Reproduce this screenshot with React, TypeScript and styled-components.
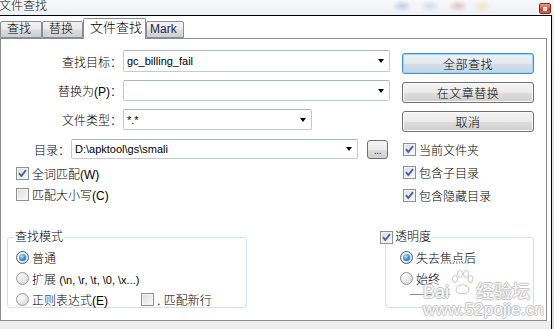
import React from "react";
import styled, { createGlobalStyle } from "styled-components";

const Global = createGlobalStyle`
  html, body { margin: 0; padding: 0; background: #e4e4e4; }
  body {
    font-family: "Liberation Sans", "Noto Sans CJK SC", sans-serif;
    font-size: 12px;
    font-weight: 300;
    color: #000;
  }
  * { box-sizing: border-box; }
`;

const Screen = styled.div`
  position: relative;
  width: 554px;
  height: 329px;
  overflow: hidden;
  display: flex;
  flex-direction: column;
  background: #e2e2e2;
`;

const TitleBar = styled.div`
  height: 15px;
  flex: none;
  display: flex;
  justify-content: space-between;
  align-items: flex-start;
  padding-right: 3px;
  background:
    radial-gradient(ellipse 10px 6px at 402px 6px, rgba(90, 130, 190, 0.35), transparent),
    radial-gradient(ellipse 10px 6px at 430px 6px, rgba(120, 160, 210, 0.3), transparent),
    radial-gradient(ellipse 10px 6px at 458px 6px, rgba(200, 70, 60, 0.3), transparent),
    radial-gradient(ellipse 10px 6px at 482px 6px, rgba(230, 200, 90, 0.35), transparent),
    linear-gradient(#f7f8fa, #eef1f5);
`;

const TitleText = styled.span`
  font-size: 12px;
  line-height: 13px;
  margin-left: -1px;
  color: #111;
  text-shadow: 0 0 3px #fff;
`;

const CloseButton = styled.div`
  width: 12px;
  height: 11px;
  margin-top: 3px;
  border: 1px solid #8a2a1c;
  border-radius: 2px;
  background: linear-gradient(#e9a08c, #d2553b 50%, #c23a22 51%, #d8674c);
  display: flex;
  align-items: center;
  justify-content: center;
`;

const CloseGlyph = styled.span`
  width: 4px;
  height: 4px;
  background: #cfcfcf;
  border: 1px solid #fff;
`;

const WindowRow = styled.div`
  flex: 1;
  display: flex;
`;

const Window = styled.div`
  width: 552px;
  border-top: 1px solid #000;
  border-right: 1px solid #000;
  background: #fff;
  display: flex;
  flex-direction: column;
`;

const Desktop = styled.div`
  flex: 1;
  background: linear-gradient(#e8e8e8, #dcdcdc);
`;

const TabStrip = styled.div`
  height: 22px;
  flex: none;
  display: flex;
  align-items: flex-end;
  position: relative;
  z-index: 1;
`;

const Tab = styled.div<{ $active?: boolean; $w: number; $pad: number }>`
  width: ${(p) => p.$w}px;
  height: ${(p) => (p.$active ? 21 : 17)}px;
  margin-bottom: ${(p) => (p.$active ? -1 : 0)}px;
  border: 1px solid #898c95;
  border-bottom: ${(p) => (p.$active ? "none" : "1px solid #898c95")};
  border-radius: 2px 2px 0 0;
  background: ${(p) =>
    p.$active ? "#fff" : "linear-gradient(#f3f3f3, #ebebeb 45%, #dcdcdc 55%, #cfcfcf)"};
  display: flex;
  align-items: ${(p) => (p.$active ? "flex-start" : "center")};
  padding-left: ${(p) => p.$pad}px;
  padding-top: ${(p) => (p.$active ? 1 : 0)}px;
  font-size: ${(p) => (p.$active ? 13 : 12)}px;
  line-height: 15px;
  color: #000;
`;

const MarkText = styled.span`
  font-family: "Liberation Sans", sans-serif;
  font-size: 12px;
  color: #1c2450;
`;

const Panel = styled.div`
  width: 547px;
  height: 283px;
  flex: none;
  border: 1px solid #898c95;
  display: flex;
  flex-direction: column;
`;

const TopSection = styled.div`
  display: flex;
`;

const LeftCol = styled.div`
  width: 401px;
  padding-top: 11px;
  display: flex;
  flex-direction: column;
`;

const RightCol = styled.div`
  width: 132px;
  padding-top: 14px;
  display: flex;
  flex-direction: column;
`;

const FieldRow = styled.div<{ $mt: number }>`
  display: flex;
  align-items: center;
  margin-top: ${(p) => p.$mt}px;
`;

const FieldLabel = styled.label<{ $w: number }>`
  width: ${(p) => p.$w}px;
  text-align: right;
  padding-right: 1px;
  white-space: nowrap;
  font-size: 12px;
`;

const Combo = styled.div<{ $w: number; $h: number }>`
  width: ${(p) => p.$w}px;
  height: ${(p) => p.$h}px;
  border: 1px solid #c3cad3;
  border-top-color: #abb3bd;
  border-radius: 2px;
  background: #fff;
  display: flex;
  align-items: center;
  padding-left: 3px;
  padding-right: 5px;
`;

const ComboValue = styled.span`
  flex: 1;
  font-size: 11px;
  white-space: nowrap;
  overflow: hidden;
`;

const DropArrow = styled.span`
  width: 0;
  height: 0;
  border-left: 3.5px solid transparent;
  border-right: 3.5px solid transparent;
  border-top: 4px solid #000;
`;

const BrowseButton = styled.div`
  width: 21px;
  height: 19px;
  margin-left: 9px;
  border: 1px solid #707070;
  border-radius: 3px;
  background: linear-gradient(#f4f4f4, #ebebeb 50%, #dddddd 51%, #cfcfcf);
  display: flex;
  align-items: flex-end;
  justify-content: center;
  padding-bottom: 2px;
  font-size: 10px;
  line-height: 10px;
  color: #1e2a66;
  letter-spacing: -0.5px;
`;

const Button = styled.div<{ $default?: boolean; $mt: number }>`
  height: 21px;
  margin-top: ${(p) => p.$mt}px;
  border: 1px solid ${(p) => (p.$default ? "#3c8fd0" : "#707070")};
  border-radius: 3px;
  background: ${(p) =>
    p.$default
      ? "linear-gradient(#eef3f7, #e1e9ef 50%, #d2dee8 51%, #c8d6e2)"
      : "linear-gradient(#f4f4f4, #ebebeb 50%, #dddddd 51%, #cfcfcf)"};
  box-shadow: ${(p) => (p.$default ? "inset 0 0 0 1px #9fd6f7" : "inset 0 0 0 1px #fbfbfb")};
  display: flex;
  align-items: center;
  justify-content: center;
  font-size: 12px;
  letter-spacing: 0.5px;
  color: #000;
`;

const CheckRow = styled.div<{ $mt: number; $pl: number }>`
  display: flex;
  align-items: center;
  height: 13px;
  margin-top: ${(p) => p.$mt}px;
  padding-left: ${(p) => p.$pl}px;
  gap: 3px;
  white-space: nowrap;
  font-size: 12px;
`;

const Box = styled.span`
  width: 13px;
  height: 13px;
  flex: none;
  border: 1px solid #8e8f8f;
  background: linear-gradient(135deg, #dcdcdc, #fbfbfb);
  box-shadow: inset 0 0 0 1px #f4f4f4;
  display: flex;
  align-items: center;
  justify-content: center;
`;

const Check = ({ on }: { on?: boolean }) => (
  <Box>
    {on && (
      <svg width="11" height="11" viewBox="0 0 11 11">
        <path d="M2 5.2 L4.3 8 L9 2.2" fill="none" stroke="#4a5fa8" strokeWidth="1.9" />
      </svg>
    )}
  </Box>
);

const RadioCircle = styled.span<{ $on?: boolean }>`
  width: 13px;
  height: 13px;
  flex: none;
  border-radius: 50%;
  border: 1px solid ${(p) => (p.$on ? "#4c6079" : "#9a9a9a")};
  background: radial-gradient(circle at 35% 30%, #ffffff, #dedede 70%, #cfcfcf);
  display: flex;
  align-items: center;
  justify-content: center;
`;

const RadioDot = styled.span`
  width: 7px;
  height: 7px;
  border-radius: 50%;
  background: radial-gradient(circle at 40% 35%, #bfe8ff 0, #3a9be0 45%, #0b4f94 100%);
`;

const Radio = ({ on }: { on?: boolean }) => (
  <RadioCircle $on={on}>{on && <RadioDot />}</RadioCircle>
);

const OptionRow = styled.div`
  display: flex;
  align-items: center;
  height: 14px;
  gap: 3px;
  white-space: nowrap;
  font-size: 12px;
`;

const OptionList = styled.div`
  display: flex;
  flex-direction: column;
  gap: 7px;
  padding-top: 5px;
`;

const Spacer = styled.span<{ $w: number }>`
  display: inline-block;
  width: ${(p) => p.$w}px;
`;

const Latin = styled.span`
  font-size: 11px;
`;

const LowerSection = styled.div`
  margin-top: auto;
  display: flex;
  align-items: flex-start;
  padding: 0 0 12px 6px;
`;

const Group = styled.fieldset<{ $w: number; $ml: number; $pl: number }>`
  width: ${(p) => p.$w}px;
  margin: 0 0 0 ${(p) => p.$ml}px;
  padding: 0 0 1px ${(p) => p.$pl}px;
  border: 1px solid #d5dfe5;
  border-radius: 3px;
  min-width: 0;
`;

const Legend = styled.legend<{ $ml: number }>`
  padding: 0 1px;
  margin-left: ${(p) => p.$ml}px;
  line-height: 16px;
  font-size: 12px;
  display: flex;
  align-items: center;
  gap: 2px;
  background: #fff;
`;

const TrackLine = styled.div`
  height: 14px;
  display: flex;
  align-items: flex-start;
  padding-left: 10px;
`;

const TrackBar = styled.span`
  width: 40px;
  height: 1px;
  margin-top: 2px;
  background: #8c8c8c;
`;

const Footer = styled.div`
  flex: 1;
  background: #f0eded;
`;

const Watermark = styled.div`
  position: absolute;
  left: 423px;
  top: 272px;
  width: 128px;
  pointer-events: none;
  display: flex;
  flex-direction: column;
  gap: 2px;
  color: rgba(255, 255, 255, 0.92);
  text-shadow: -1px 0 #c4c4c4, 1px 0 #c4c4c4, 0 -1px #c4c4c4, 0 1px #c4c4c4;
  font-family: "Liberation Sans", "Noto Sans CJK SC", sans-serif;
  font-weight: 400;
`;

const WmTop = styled.div`
  display: flex;
  align-items: flex-end;
  height: 28px;
  font-size: 18px;
  line-height: 15px;
  white-space: nowrap;
`;

const WmPaw = styled.span`
  position: relative;
  width: 27px;
  height: 28px;
  flex: none;
`;

const PawSvg = styled.svg`
  position: absolute;
  left: 2px;
  top: -2px;
`;

const WmBottom = styled.div`
  font-size: 17px;
  line-height: 16px;
  letter-spacing: 0.2px;
  white-space: nowrap;
`;

export default function App() {
  return (
    <>
      <Global />
      <Screen>
        <TitleBar>
          <TitleText>文件查找</TitleText>
          <CloseButton>
            <CloseGlyph />
          </CloseButton>
        </TitleBar>
        <WindowRow>
          <Window>
            <TabStrip>
              <Tab $w={42} $pad={6}>查找</Tab>
              <Tab $w={41} $pad={6}>替换</Tab>
              <Tab $w={63} $pad={6} $active>文件查找</Tab>
              <Tab $w={38} $pad={3}>
                <MarkText>Mark</MarkText>
              </Tab>
            </TabStrip>
            <Panel>
              <TopSection>
                <LeftCol>
                  <FieldRow $mt={0}>
                    <FieldLabel $w={122}>查找目标：</FieldLabel>
                    <Combo $w={267} $h={22}>
                      <ComboValue>gc_billing_fail</ComboValue>
                      <DropArrow />
                    </Combo>
                  </FieldRow>
                  <FieldRow $mt={8}>
                    <FieldLabel $w={122}>替换为(P)：</FieldLabel>
                    <Combo $w={267} $h={21}>
                      <ComboValue />
                      <DropArrow />
                    </Combo>
                  </FieldRow>
                  <FieldRow $mt={8}>
                    <FieldLabel $w={122}>文件类型：</FieldLabel>
                    <Combo $w={189} $h={21}>
                      <ComboValue>*.*</ComboValue>
                      <DropArrow />
                    </Combo>
                  </FieldRow>
                  <FieldRow $mt={9}>
                    <FieldLabel $w={70}>目录：</FieldLabel>
                    <Combo $w={287} $h={20}>
                      <ComboValue>D:\apktool\gs\smali</ComboValue>
                      <DropArrow />
                    </Combo>
                    <BrowseButton>...</BrowseButton>
                  </FieldRow>
                  <CheckRow $mt={8} $pl={15}>
                    <Check on />
                    <span>全词匹配(W)</span>
                  </CheckRow>
                  <CheckRow $mt={8} $pl={15}>
                    <Check />
                    <span>匹配大小写(C)</span>
                  </CheckRow>
                </LeftCol>
                <RightCol>
                  <Button $default $mt={0}>全部查找</Button>
                  <Button $mt={8}>在文章替换</Button>
                  <Button $mt={8}>取消</Button>
                  <CheckRow $mt={11} $pl={1}>
                    <Check on />
                    <span>当前文件夹</span>
                  </CheckRow>
                  <CheckRow $mt={10} $pl={1}>
                    <Check on />
                    <span>包含子目录</span>
                  </CheckRow>
                  <CheckRow $mt={10} $pl={1}>
                    <Check on />
                    <span>包含隐藏目录</span>
                  </CheckRow>
                </RightCol>
              </TopSection>
              <LowerSection>
                <Group $w={240} $ml={0} $pl={8}>
                  <Legend $ml={-2}>查找模式</Legend>
                  <OptionList>
                    <OptionRow>
                      <Radio on />
                      <span>普通</span>
                    </OptionRow>
                    <OptionRow>
                      <Radio />
                      <span>
                        扩展 <Latin>(\n, \r, \t, \0, \x...)</Latin>
                      </span>
                    </OptionRow>
                    <OptionRow>
                      <Radio />
                      <span>正则表达式(E)</span>
                      <Spacer $w={27} />
                      <Check />
                      <span>. 匹配新行</span>
                    </OptionRow>
                  </OptionList>
                </Group>
                <Group $w={149} $ml={138} $pl={14}>
                  <Legend $ml={-21}>
                    <Check on />
                    <span>透明度</span>
                  </Legend>
                  <OptionList>
                    <OptionRow>
                      <Radio on />
                      <span>失去焦点后</span>
                    </OptionRow>
                    <OptionRow>
                      <Radio />
                      <span>始终</span>
                    </OptionRow>
                    <TrackLine>
                      <TrackBar />
                    </TrackLine>
                  </OptionList>
                </Group>
              </LowerSection>
            </Panel>
            <Footer />
          </Window>
          <Desktop />
        </WindowRow>
        <Watermark>
          <WmTop>
            <span>Bai</span>
            <WmPaw>
              <PawSvg width="23" height="26" viewBox="0 0 23 26">
                <g fill="rgba(255,255,255,0.85)" stroke="#c8c8c8" strokeWidth="1">
                  <ellipse cx="4" cy="9" rx="2.5" ry="3.5" />
                  <ellipse cx="9" cy="4" rx="2.5" ry="3.5" />
                  <ellipse cx="15" cy="4" rx="2.5" ry="3.5" />
                  <ellipse cx="19.5" cy="9" rx="2.5" ry="3.5" />
                  <path d="M5 20 C5 13 18 13 18 20 C18 25 5 25 5 20 Z" />
                </g>
              </PawSvg>
            </WmPaw>
            <span>经验坛</span>
          </WmTop>
          <WmBottom>www.52pojie.cn</WmBottom>
        </Watermark>
      </Screen>
    </>
  );
}
